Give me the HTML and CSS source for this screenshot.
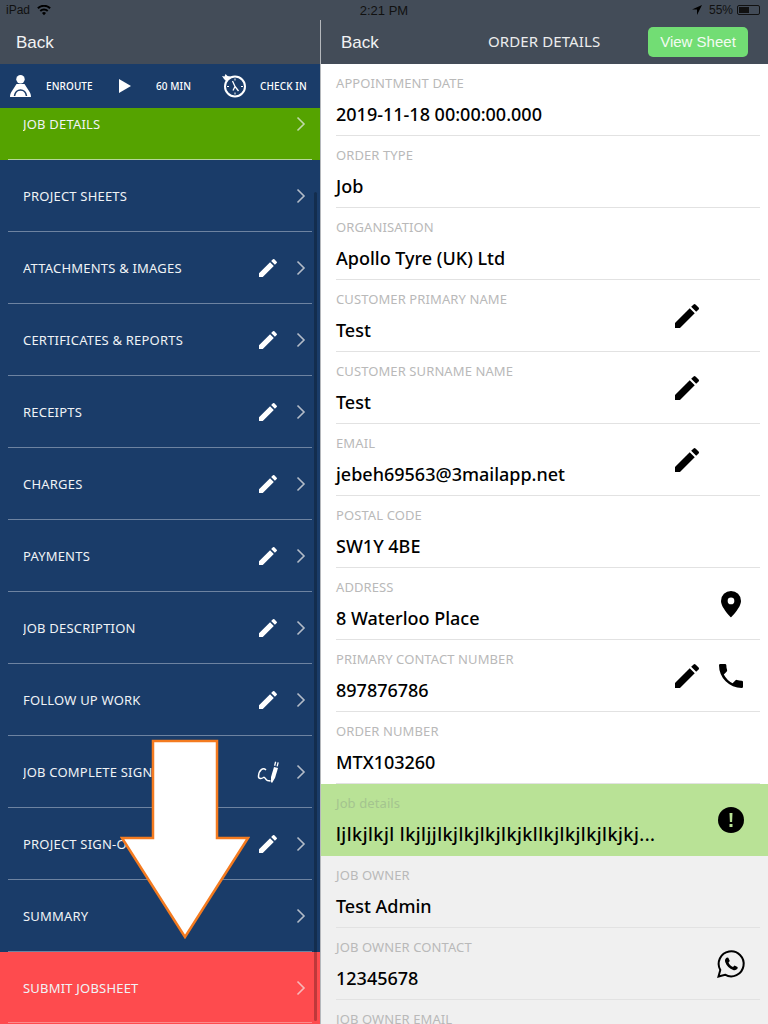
FILE: index.html
```html
<!DOCTYPE html>
<html lang="en">
<head>
<meta charset="UTF-8">
<meta name="viewport" content="width=device-width, initial-scale=1.0">
<title>Order Details</title>
<link rel="stylesheet" href="styles.css">
</head>
<body>

<svg class="defs" width="0" height="0">
    <symbol id="pencil" viewBox="0 0 24 24"><path d="M3 17.250V21h3.750L17.810 9.940l-3.750-3.750L3 17.250zM20.710 7.040a1 1 0 0 0 0-1.410l-2.340-2.340a1 1 0 0 0-1.410 0l-1.830 1.830 3.750 3.750 1.830-1.830z"/></symbol>
    <symbol id="chevron" viewBox="0 0 10 16"><path d="M1.500 1.500 8 8l-6.500 6.500" fill="none" stroke="currentColor" stroke-width="1.600"/></symbol>
</svg>

<div class="statusbar">
    <div class="status-left">iPad
        <svg class="wifi" viewBox="0 0 16 12"><path d="M8 11.500 5.700 8.800a3.300 3.300 0 0 1 4.600 0zM4.500 7.500 3 5.800a7 7 0 0 1 10 0l-1.500 1.700a5 5 0 0 0-7 0zM1.800 4.400.2 2.700a11 11 0 0 1 15.600 0l-1.600 1.700a8.800 8.800 0 0 0-12.400 0z"/></svg>
    </div>
    <div class="status-time">2:21 PM</div>
    <div class="status-right">
        <svg class="locate" viewBox="0 0 10 10"><path d="M10 0 0 4.500h5V10z"/></svg>
        <span>55%</span>
        <span class="battery"><span class="battery-level"></span></span>
    </div>
</div>

<div class="split">
    <div class="sidebar">
        <div class="navbar"><span class="back">Back</span></div>
        <div class="strip">
            <svg class="strip-driver" viewBox="0 0 22 22"><circle cx="10.500" cy="4.300" r="4.200"/><path d="M0 22c0-2 .5-4 2-6 1.500-2 3-5 4.500-7h8c1.500 2 3 5 4.500 7 1.500 2 2 4 2 6z"/><path d="M4.500 21c.5-3.500 3-6 6-6s5.500 2.500 6 6" fill="none" stroke="#1a3c69" stroke-width="1.600"/></svg>
            <span class="strip-label strip-enroute">ENROUTE</span>
            <svg class="strip-play" viewBox="0 0 12 14"><path d="M0 0 12 7 0 14z"/></svg>
            <span class="strip-label strip-min">60 MIN</span>
            <svg class="strip-clock" viewBox="0 0 26 26"><circle cx="13" cy="13.500" r="10" fill="none" stroke="#fff" stroke-width="2"/><path d="M13 13.500 10.500 8M13 13.500l3.500 4.500M13 13.500l-2 4" fill="none" stroke="#fff" stroke-width="1.300"/><path d="M13 5.500v2M13 19.500v2M5 13.500h2M19 13.500h2" stroke="#fff" stroke-width="1"/><path d="M0 3l2.500.5L3.500 1l2 2 3 .5-1.500 2-3 2.500-2-2z"/></svg>
            <span class="strip-label">CHECK IN</span>
        </div>
        <div class="menu-wrap">
            <ul class="menu" id="menu"></ul>
            <div class="scrollbar"></div>
        </div>
    </div>

    <div class="main">
        <div class="navbar">
            <span class="back">Back</span>
            <span class="nav-title">ORDER DETAILS</span>
            <span class="view-btn">View Sheet</span>
        </div>
        <div class="fields">
            <div class="field"><div class="field-text"><div class="label">APPOINTMENT DATE</div><div class="value">2019-11-18 00:00:00.000</div></div></div>
            <div class="field"><div class="field-text"><div class="label">ORDER TYPE</div><div class="value">Job</div></div></div>
            <div class="field"><div class="field-text"><div class="label">ORGANISATION</div><div class="value">Apollo Tyre (UK) Ltd</div></div></div>
            <div class="field"><div class="field-text"><div class="label">CUSTOMER PRIMARY NAME</div><div class="value">Test</div></div>
                <div class="field-icons"><svg class="ico"><use href="#pencil"/></svg><span class="ico"></span></div></div>
            <div class="field"><div class="field-text"><div class="label">CUSTOMER SURNAME NAME</div><div class="value">Test</div></div>
                <div class="field-icons"><svg class="ico"><use href="#pencil"/></svg><span class="ico"></span></div></div>
            <div class="field"><div class="field-text"><div class="label">EMAIL</div><div class="value">jebeh69563@3mailapp.net</div></div>
                <div class="field-icons"><svg class="ico"><use href="#pencil"/></svg><span class="ico"></span></div></div>
            <div class="field"><div class="field-text"><div class="label">POSTAL CODE</div><div class="value">SW1Y 4BE</div></div></div>
            <div class="field"><div class="field-text"><div class="label">ADDRESS</div><div class="value">8 Waterloo Place</div></div>
                <div class="field-icons"><svg class="ico" viewBox="0 0 24 24"><path fill-rule="evenodd" d="M12 2.200a7.500 7.500 0 0 0-7.500 7.500c0 5 7.500 12.300 7.500 12.300s7.500-7.300 7.500-12.300a7.500 7.500 0 0 0-7.500-7.500zm0 10a2.500 2.500 0 1 1 0-5 2.500 2.500 0 0 1 0 5z"/></svg></div></div>
            <div class="field"><div class="field-text"><div class="label">PRIMARY CONTACT NUMBER</div><div class="value">897876786</div></div>
                <div class="field-icons"><svg class="ico"><use href="#pencil"/></svg><svg class="ico" viewBox="0 0 24 24"><path d="M6.620 10.790a15.150 15.150 0 0 0 6.590 6.590l2.200-2.200a1 1 0 0 1 1.020-.24c1.120.37 2.330.57 3.570.57a1 1 0 0 1 1 1V20a1 1 0 0 1-1 1A17 17 0 0 1 3 4a1 1 0 0 1 1-1h3.500a1 1 0 0 1 1 1c0 1.250.2 2.450.57 3.570a1 1 0 0 1-.25 1.020l-2.200 2.200z"/></svg></div></div>
            <div class="field"><div class="field-text"><div class="label">ORDER NUMBER</div><div class="value">MTX103260</div></div></div>
            <div class="field field-green"><div class="field-text"><div class="label">Job details</div><div class="value value-cut">ljlkjlkjl lkjljjlkjlkjlkjlkjkllkjlkjlkjlkjkj...</div></div>
                <div class="field-icons"><svg class="ico" viewBox="-2 -2 32 32"><circle cx="14" cy="14" r="13"/><path d="M12.500 7h3l-.4 9h-2.200zM12.500 18h3v3h-3z" fill="#b9e296"/></svg></div></div>
            <div class="field field-grey"><div class="field-text"><div class="label">JOB OWNER</div><div class="value">Test Admin</div></div></div>
            <div class="field field-grey"><div class="field-text"><div class="label">JOB OWNER CONTACT</div><div class="value">12345678</div></div>
                <div class="field-icons"><svg class="ico" viewBox="-2 -2 32 32"><path d="M1.500 26.500 3.300 20A12.500 12.500 0 1 1 8 24.700z" fill="none" stroke="#000" stroke-width="2"/><path d="M10 7.500c-1.500.7-2.500 2.500-1.800 4.500 1.300 3.700 4.300 6.800 8 8 2 .6 3.800-.4 4.500-2l-.2-1-3-1.500-1.500 1.500c-2-.8-3.700-2.500-4.500-4.500l1.300-1.500-1.500-3.200z"/></svg></div></div>
            <div class="field field-grey"><div class="field-text"><div class="label">JOB OWNER EMAIL</div></div></div>
        </div>
    </div>
</div>

<!-- annotation drawn over the screenshot -->
<svg class="arrow" viewBox="0 0 130 200"><path d="M33 2H97V99H128L65 198 2 99H33z" fill="#fff" stroke="#f47b20" stroke-width="2.500"/></svg>

<script>
const items = [
    ['JOB DETAILS', '', 'menu-green'],
    ['PROJECT SHEETS', '', ''],
    ['ATTACHMENTS & IMAGES', 'pencil', ''],
    ['CERTIFICATES & REPORTS', 'pencil', ''],
    ['RECEIPTS', 'pencil', ''],
    ['CHARGES', 'pencil', ''],
    ['PAYMENTS', 'pencil', ''],
    ['JOB DESCRIPTION', 'pencil', ''],
    ['FOLLOW UP WORK', 'pencil', ''],
    ['JOB COMPLETE SIGN-OFF', 'sign', ''],
    ['PROJECT SIGN-OFF', 'pencil', ''],
    ['SUMMARY', '', ''],
    ['SUBMIT JOBSHEET', '', 'menu-red']
];
const signIcon = '<svg class="menu-icon" viewBox="0 0 24 24"><path d="M10 10C7 7 3 10 2.500 16c-.3 3 3 3 5 1.500 1.500-1 2 2.500 4 3l3 .5" fill="none" stroke="#fff" stroke-width="1.500"/><path d="M18 7l4 1-3 10-3 5-1-1v-5z"/><path d="M19 1.500l1.300.4-1 4-1.300-.4zM21.500 2.200l1.300.4-1 4-1.300-.4z"/></svg>';
const pencilIcon = '<svg class="menu-icon"><use href="#pencil"/></svg>';
document.getElementById('menu').innerHTML = items.map(item => {
    const icon = item[1] === 'pencil' ? pencilIcon : item[1] === 'sign' ? signIcon : '';
    const text = item[0].replace('&', '&amp;');
    return `<li class="menu-item ${item[2]}"><span class="menu-text">${text}</span>${icon}<svg class="chevron"><use href="#chevron"/></svg></li>`;
}).join('');
</script>
</body>
</html>
```

FILE: styles.css
```css
html, body { margin:0; padding:0; }
body { width:768px; height:1024px; overflow:hidden; position:relative; font-family:"Noto Sans",sans-serif; background:#fff; }
.defs { position:absolute; }

.statusbar { height:20px; background:#434c58; display:flex; justify-content:space-between; align-items:center; padding:0 8px 0 6px; font-family:"Liberation Sans",sans-serif; font-size:12px; color:#111; position:relative; }
.status-left { display:flex; align-items:center; gap:7px; }
.wifi { width:14px; height:11px; }
.status-time { position:absolute; left:0; right:0; text-align:center; font-size:13px; }
.status-right { display:flex; align-items:center; gap:4px; font-size:12px; color:#111; }
.locate { width:10px; height:10px; margin-right:3px; }
.battery { width:23px; height:10px; border:1px solid #111; border-radius:2px; display:block; padding:1px; box-sizing:border-box; }
.battery-level { display:block; height:100%; width:55%; background:#111; }

.split { display:flex; height:1004px; }
.sidebar { width:320px; display:flex; flex-direction:column; overflow:hidden; border-right:1px solid #b5b8bc; flex:none; }
.main { flex:1; min-width:0; display:flex; flex-direction:column; overflow:hidden; background:#fff; }

.navbar { height:44px; background:#434c58; display:flex; align-items:center; flex:none; position:relative; color:#fff; }
.back { font-size:17px; padding:2px 0 0 16px; font-family:"Liberation Sans",sans-serif; color:#f2f3f4; }
.main .back { padding-left:20px; }
.nav-title { position:absolute; left:167px; top:11px; font-size:15px; letter-spacing:.1px; color:#eceded; }
.view-btn { position:absolute; right:20px; top:7px; width:100px; height:30px; background:#72dd74; border-radius:5px; text-align:center; line-height:30px; font-family:"Liberation Sans",sans-serif; font-size:15px; color:#f2fbf2; }

.strip { height:44px; background:#1a3c69; display:flex; align-items:center; color:#fff; flex:none; padding-left:10px; fill:#fff; }
.strip-driver { width:22px; height:22px; margin-right:14px; }
.strip-label { font-size:10px; font-weight:500; letter-spacing:.1px; }
.strip-enroute { width:73px; }
.strip-play { width:12px; height:14px; margin-right:25px; }
.strip-min { width:66px; }
.strip-clock { width:26px; height:26px; margin-right:12px; }

.menu-wrap { position:relative; flex:1; overflow:hidden; background:#1a3c69; }
.menu { list-style:none; margin:-20px 0 0; padding:0; }
.menu-item { height:72px; display:flex; align-items:center; padding:0 14px 0 23px; color:#f0f3f6; position:relative; box-sizing:border-box; }
.menu-item::after { content:""; position:absolute; left:8px; right:8px; bottom:0; height:1px; background:#6d83a1; }
.menu-green { background:#55a300; }
.menu-green::after { background:#b5d79a; }
.menu-red { background:#fe4b4e; }
.menu-red::after { background:#fc8a8b; bottom:1px; }
.menu-text { flex:1; font-size:13px; letter-spacing:.2px; line-height:16px; white-space:nowrap; overflow:hidden; }
.menu-icon { width:24px; height:24px; fill:#fff; margin-right:16px; }
.chevron { width:10px; height:16px; color:#b3bcc8; }
.menu-red .chevron { color:#f6b9ba; }
.menu-green .chevron { color:#bfdaa8; }
.scrollbar { position:absolute; right:3px; top:84px; bottom:3px; width:3px; border-radius:2px; background:rgba(0,0,0,.25); }

.fields { flex:1; overflow:hidden; }
.field { height:72px; box-sizing:border-box; display:flex; padding:0 8px 0 15px; position:relative; }
.field::after { content:""; position:absolute; left:15px; right:8px; bottom:0; height:1px; background:#e2e2e2; }
.field-text { flex:1; min-width:0; padding-top:10px; }
.label { font-size:13px; line-height:18px; color:#b9b9b9; letter-spacing:.1px; }
.value { font-size:18px; line-height:24px; margin-top:10px; color:#000; white-space:nowrap; font-weight:500; }
.value-cut { letter-spacing:.5px; }
.field-icons { display:flex; align-items:center; gap:12px; padding-right:13px; }
.ico { display:block; width:32px; height:32px; fill:#000; }
.field-green { background:#b9e296; }
.field-green::after { display:none; }
.field-green .label { color:#a4c48f; }
.field-grey { background:#f0f0f0; }

.arrow { position:absolute; left:120px; top:739px; width:130px; height:200px; }
```
